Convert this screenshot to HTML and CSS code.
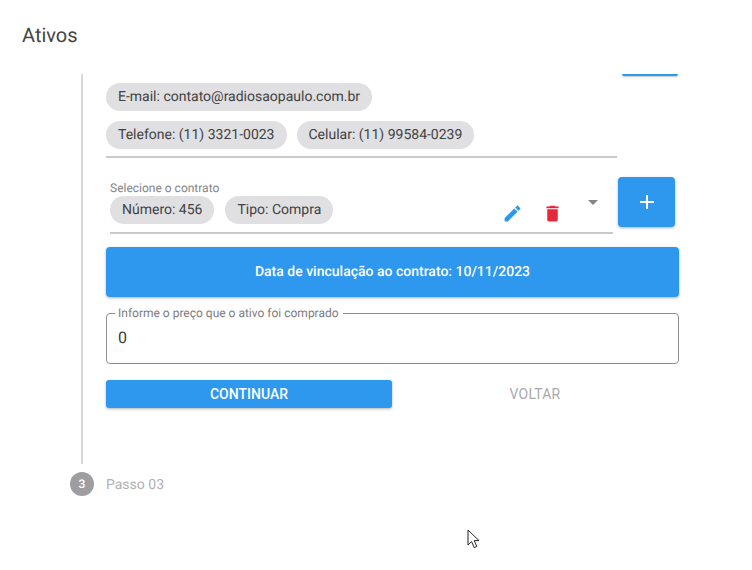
FILE: index.html
```html
<!DOCTYPE html>
<html lang="en">
<head>
  <meta charset="UTF-8">
  <meta name="viewport" content="width=device-width, initial-scale=1.0">
  <title>Ativos</title>
  <link rel="stylesheet" href="styles.css">
</head>
<body>
  <h1 class="title">Ativos</h1>

  <div class="step-body">
    <div class="top-row">
      <div class="top-button"></div>
    </div>

    <div class="info-box">
      <div class="chip-row">
        <span class="chip">E-mail: contato@radiosaopaulo.com.br</span>
      </div>
      <div class="chip-row">
        <span class="chip">Telefone: (11) 3321-0023</span>
        <span class="chip">Celular: (11) 99584-0239</span>
      </div>
    </div>

    <div class="contract-row">
      <div class="contract-select">
        <div class="select-label">Selecione o contrato</div>
        <div class="select-value">
          <span class="chip">Número: 456</span>
          <span class="chip">Tipo: Compra</span>
          <svg class="icon-edit" width="21" height="21" viewBox="0 0 24 24"><path d="M3 17.25V21h3.75L17.81 9.94l-3.75-3.75L3 17.25zM20.71 7.04c.39-.39.39-1.02 0-1.41l-2.34-2.34c-.39-.39-1.02-.39-1.41 0l-1.83 1.83 3.75 3.75 1.83-1.83z"/></svg>
          <svg class="icon-delete" width="21" height="21" viewBox="0 0 24 24"><path d="M6 19c0 1.1.9 2 2 2h8c1.1 0 2-.9 2-2V7H6v12zM19 4h-3.5l-1-1h-5l-1 1H5v2h14V4z"/></svg>
          <span class="select-arrow"></span>
        </div>
      </div>
      <button class="add-button">
        <svg width="24" height="24" viewBox="0 0 24 24"><path d="M19 13h-6v6h-2v-6H5v-2h6V5h2v6h6v2z"/></svg>
      </button>
    </div>

    <div class="date-banner">Data de vinculação ao contrato: 10/11/2023</div>

    <fieldset class="price-field">
      <legend>Informe o preço que o ativo foi comprado</legend>
      <div class="price-value">0</div>
    </fieldset>

    <div class="actions">
      <button class="btn-continue">CONTINUAR</button>
      <button class="btn-back">VOLTAR</button>
    </div>
  </div>

  <div class="step-next">
    <span class="step-number">3</span>
    <span class="step-name">Passo 03</span>
  </div>

  <svg class="cursor" width="14" height="20" viewBox="0 0 14 20"><path d="M1 1v15l3.6-3.4 2.6 6 2.6-1.1-2.6-5.9H12z"/></svg>
</body>
</html>
```

FILE: styles.css
```css
* {
  box-sizing: border-box;
}
body {
  font-family: Roboto, sans-serif;
  margin: 0;
  padding: 0;
  background: #ffffff;
  color: #3a3a3a;
  height: 570px;
  overflow: hidden;
  text-rendering: geometricPrecision;
}
.title {
  margin: 0;
  padding: 23px 0 0 22px;
  height: 74px;
  font-size: 20px;
  font-weight: 400;
  line-height: 24px;
  color: #444444;
}
.step-body {
  margin-left: 81px;
  width: 598px;
  height: 390px;
  padding-left: 23px;
  border-left: 2px solid #d8d8da;
}
.top-row {
  display: flex;
  justify-content: flex-end;
  height: 9px;
  padding-right: 1px;
}
.top-button {
  width: 56px;
  height: 2px;
  background: #2d98ed;
  border-radius: 0 0 3px 3px;
  box-shadow: 0 1px 2px rgba(0, 0, 0, 0.25);
}
.info-box {
  width: 511px;
  height: 75px;
  border-bottom: 2px solid #c9c8cc;
}
.chip-row {
  display: flex;
  gap: 10px;
  margin-bottom: 10px;
}
.chip {
  display: inline-block;
  height: 28px;
  padding: 0 12px;
  border-radius: 14px;
  background: #e0dfe2;
  font-size: 14px;
  line-height: 28px;
  white-space: nowrap;
  color: #424242;
}
.contract-row {
  display: flex;
  align-items: flex-start;
  margin-top: 19px;
  padding-left: 4px;
}
.contract-select {
  width: 503px;
  height: 57px;
  padding-top: 4px;
  border-bottom: 2px solid #c9c8cc;
}
.select-label {
  font-size: 12px;
  line-height: 15px;
  color: #858585;
}
.select-value {
  display: flex;
  gap: 11px;
  position: relative;
}
.icon-edit {
  fill: #2d98ed;
  position: absolute;
  left: 392px;
  top: 6.5px;
}
.icon-delete {
  fill: #e5283b;
  position: absolute;
  left: 432px;
  top: 6.5px;
}
.select-arrow {
  position: absolute;
  left: 478px;
  top: 4px;
  border-left: 5px solid transparent;
  border-right: 5px solid transparent;
  border-top: 5px solid #858585;
}
.add-button {
  width: 57px;
  height: 50px;
  margin-left: 5px;
  border: none;
  border-radius: 4px;
  background: #2d98ed;
  box-shadow: 0 1px 3px rgba(0, 0, 0, 0.3);
  display: flex;
  align-items: center;
  justify-content: center;
  padding: 0;
}
.add-button svg {
  fill: #ffffff;
}
.date-banner {
  margin-top: 13px;
  width: 573px;
  height: 50px;
  background: #2d98ed;
  border-radius: 4px;
  box-shadow: 0 1px 3px rgba(0, 0, 0, 0.3);
  color: #ffffff;
  font-size: 14px;
  font-weight: 500;
  line-height: 50px;
  text-align: center;
}
.price-field {
  margin: 10px 0 0;
  padding: 0 11px 0 8px;
  width: 573px;
  height: 57px;
  border: 1px solid #8e8e8e;
  border-radius: 4px;
}
.price-field legend {
  padding: 0 4px 0 3px;
  margin-left: 0;
  font-size: 12px;
  line-height: 12px;
  color: #7c7c7c;
}
.price-value {
  margin-top: 7px;
  padding-left: 3px;
  font-size: 16px;
  line-height: 24px;
}
.actions {
  display: flex;
  margin-top: 16px;
}
.btn-continue,
.btn-back {
  width: 286px;
  height: 28px;
  border: none;
  border-radius: 3px;
  font-family: Roboto, sans-serif;
  font-size: 14px;
  font-weight: 500;
  padding: 0;
}
.btn-continue {
  background: #2d98ed;
  color: #ffffff;
  box-shadow: 0 1px 3px rgba(0, 0, 0, 0.3);
}
.btn-back {
  background: none;
  color: #a9a8ad;
  font-weight: 400;
  letter-spacing: 0.2px;
}
.step-next {
  display: flex;
  align-items: center;
  height: 40px;
  margin-left: 70px;
}
.step-number {
  width: 24px;
  height: 24px;
  border-radius: 50%;
  background: #9e9da1;
  color: #ffffff;
  font-size: 12px;
  font-weight: 500;
  line-height: 24px;
  text-align: center;
}
.step-name {
  margin-left: 12px;
  padding-top: 1px;
  font-size: 14px;
  color: #b2b1b6;
}
.cursor {
  position: absolute;
  left: 467px;
  top: 529px;
  fill: #ffffff;
  stroke: #222222;
  stroke-width: 1;
}
```
